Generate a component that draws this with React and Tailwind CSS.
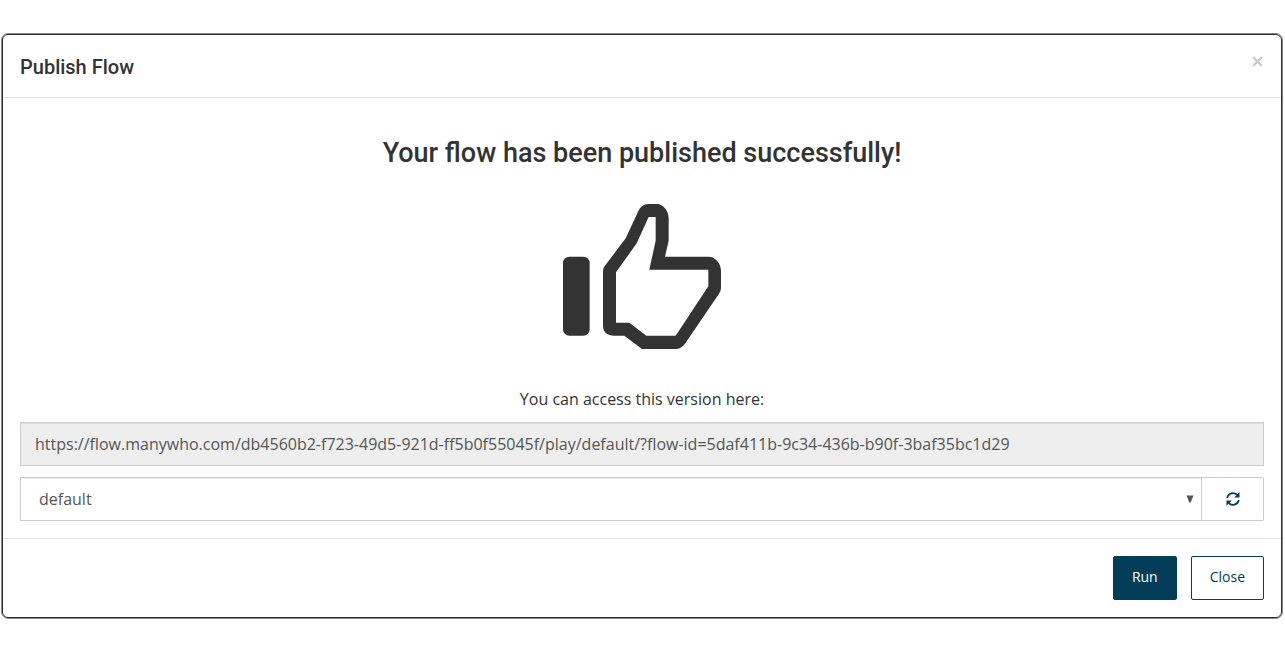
import React from "react";

const FLOW_URL =
  "https://flow.manywho.com/db4560b2-f723-49d5-921d-ff5b0f55045f/play/default/?flow-id=5daf411b-9c34-436b-b90f-3baf35bc1d29";

function ThumbsUp() {
  return (
    <svg viewBox="69 42 474 435" className="h-[145px] w-[158px]" fill="#333333" aria-hidden="true">
      <rect x="69" y="200" width="80" height="237" rx="19" />
      <path
        fillRule="evenodd"
        d="M325 42H352C368 42 386 62 386 85V152L375 200H505C525 200 543 219 543 243V290C543 300 541 306 535 314L438 457C430 469 422 477 408 477H306L253 437H222C203 437 189 427 189 408V246C189 237 191 232 196 226L257 145L291 72C298 55 308 42 325 42ZM326 81L290 160L228 247V398H268L319 437H407L505 289V239H328L347 152V81Z"
      />
    </svg>
  );
}

function Refresh() {
  return (
    <svg viewBox="0 0 14 14" className="size-3.5" fill="currentColor" aria-hidden="true">
      <g fill="none" stroke="currentColor" strokeWidth="1.7">
        <path d="M1.200 6A5.900 5.900 0 0 1 11.600 3.400" />
        <path d="M12.800 8A5.900 5.900 0 0 1 2.400 10.600" />
      </g>
      <path d="M13.500 0.200V5.500H8.200Z" />
      <path d="M0.500 13.800V8.500H5.800Z" />
    </svg>
  );
}

export default function App() {
  return (
    <main className="py-[33px] pr-0.5 pl-px font-['Open_Sans',sans-serif] text-base text-[#333333]">
      <section
        role="dialog"
        aria-labelledby="publish-title"
        className="rounded-[7px] border border-[#858585] bg-white"
      >
        <div className="rounded-md border border-[#2d2d2d]">
          <header className="flex items-start justify-between border-b border-[#e5e5e5] px-[17px] pt-[17px] pb-[15px]">
            <h1 id="publish-title" className="font-['Roboto',sans-serif] text-xl leading-[30px] font-medium">
              Publish Flow
            </h1>
            <button type="button" aria-label="Close dialog" className="px-px pt-1 text-[#cccccc]">
              <svg viewBox="0 0 10 10" className="size-[11px]" fill="none" stroke="currentColor" strokeWidth="2.2" aria-hidden="true">
                <path d="M1 1L9 9M9 1L1 9" />
              </svg>
            </button>
          </header>

          <div className="flex flex-col items-center px-[17px] pt-9 pb-[17px]">
            <h2 className="text-center font-['Roboto',sans-serif] text-[27px] leading-[38px] font-medium">
              Your flow has been published successfully!
            </h2>
            <div className="pt-8 pb-9">
              <ThumbsUp />
            </div>
            <label htmlFor="flow-url" className="pt-0.5 pb-[11px] leading-6">
              You can access this version here:
            </label>
            <input
              id="flow-url"
              type="text"
              readOnly
              value={FLOW_URL}
              className="h-11 w-full border border-[#cccccc] bg-[#eeeeee] px-3.5 text-[#555555] shadow-[inset_0_1px_1px_rgba(0,0,0,0.075)] outline-none"
            />
            <div className="mt-[11px] flex w-full">
              <div className="relative min-w-0 flex-1">
                <select
                  aria-label="Player"
                  defaultValue="default"
                  className="h-11 w-full appearance-none border border-[#cccccc] bg-white pr-8 pl-[18px] text-[#555555] shadow-[inset_0_1px_1px_rgba(0,0,0,0.075)] outline-none"
                >
                  <option value="default">default</option>
                </select>
                <svg viewBox="0 0 8 8" className="pointer-events-none absolute top-[18px] right-2 h-2 w-2" fill="#555555" aria-hidden="true">
                  <path d="M0.500 0.500H7.500L4.700 7.500H3.300Z" />
                </svg>
              </div>
              <button
                type="button"
                aria-label="Refresh players"
                className="flex h-11 w-[62px] items-center justify-center rounded-r-xs border border-l-0 border-[#cccccc] text-[#033d58]"
              >
                <Refresh />
              </button>
            </div>
          </div>

          <footer className="flex justify-end gap-3.5 border-t border-[#e5e5e5] p-[17px] text-sm">
            <button type="button" className="h-11 rounded-xs border border-[#033d58] bg-[#033d58] px-[18px] pb-0.5 text-white">
              Run
            </button>
            <button type="button" className="h-11 rounded-xs border border-[#033d58] bg-white px-[18px] pb-0.5 text-[#033d58]">
              Close
            </button>
          </footer>
        </div>
      </section>
    </main>
  );
}
